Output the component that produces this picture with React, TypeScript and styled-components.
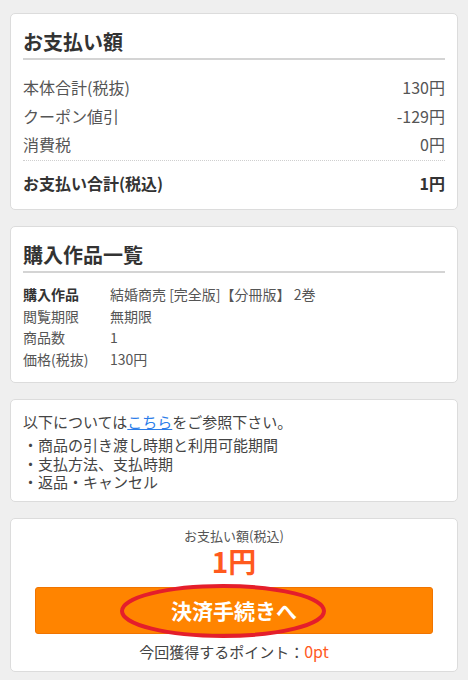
import React from 'react';
import styled, { createGlobalStyle } from 'styled-components';

const GlobalStyle = createGlobalStyle`
  html, body {
    margin: 0;
    padding: 0;
    background: #efefef;
  }
  body {
    font-family: "Noto Sans CJK JP", "Noto Sans", sans-serif;
    color: #333;
  }
`;

const summaryRows = [
  { label: '本体合計(税抜)', value: '130円' },
  { label: 'クーポン値引', value: '-129円' },
  { label: '消費税', value: '0円' },
];

const itemRows = [
  { label: '購入作品', value: '結婚商売 [完全版]【分冊版】 2巻', strong: true },
  { label: '閲覧期限', value: '無期限' },
  { label: '商品数', value: '1' },
  { label: '価格(税抜)', value: '130円' },
];

const notes = ['商品の引き渡し時期と利用可能期間', '支払方法、支払時期', '返品・キャンセル'];

const App = () => {
  return (
    <>
      <GlobalStyle />
      <Page>
        <Card>
          <CardTitle>お支払い額</CardTitle>
          <SummaryList>
            {summaryRows.map((row) => (
              <SummaryRow key={row.label}>
                <span>{row.label}</span>
                <span>{row.value}</span>
              </SummaryRow>
            ))}
          </SummaryList>
          <TotalRow>
            <span>お支払い合計(税込)</span>
            <span>1円</span>
          </TotalRow>
        </Card>

        <Card>
          <CardTitle>購入作品一覧</CardTitle>
          <ItemGrid>
            {itemRows.map((row) => (
              <React.Fragment key={row.label}>
                <ItemLabel $strong={row.strong}>{row.label}</ItemLabel>
                <ItemValue>{row.value}</ItemValue>
              </React.Fragment>
            ))}
          </ItemGrid>
        </Card>

        <NoteCard>
          <NoteLead>
            以下については<NoteLink href="#">こちら</NoteLink>をご参照下さい。
          </NoteLead>
          <NoteList>
            {notes.map((note) => (
              <li key={note}>・{note}</li>
            ))}
          </NoteList>
        </NoteCard>

        <CheckoutCard>
          <CheckoutLabel>お支払い額(税込)</CheckoutLabel>
          <CheckoutAmount>1円</CheckoutAmount>
          <ButtonWrap>
            <CheckoutButton type="button">決済手続きへ</CheckoutButton>
            <Circle width="212" height="58" viewBox="0 0 212 58">
              <ellipse cx="106" cy="29" rx="101" ry="25" fill="none" stroke="#e41e2b" strokeWidth="4" />
            </Circle>
          </ButtonWrap>
          <Points>
            今回獲得するポイント：<PointValue>0pt</PointValue>
          </Points>
        </CheckoutCard>
      </Page>
    </>
  );
};

const Page = styled.div`
  display: flex;
  flex-direction: column;
  gap: 16px;
  padding: 13px 10px 8px;
`;

const Card = styled.section`
  background: #fff;
  border: 1px solid #dcdcdc;
  border-radius: 5px;
  padding: 0 12px 12px;
`;

const CardTitle = styled.h2`
  margin: 0;
  padding-top: 14px;
  padding-bottom: 2px;
  font-size: 20px;
  line-height: 28px;
  font-weight: bold;
  color: #333;
  border-bottom: 2px solid #d4d4d4;
`;

const SummaryList = styled.div`
  margin-top: 13px;
  border-bottom: 1px dotted #cfcfcf;
  padding-bottom: 1px;
`;

const SummaryRow = styled.div`
  display: flex;
  justify-content: space-between;
  font-size: 16px;
  line-height: 28.5px;
  color: #555;
`;

const TotalRow = styled(SummaryRow)`
  padding-top: 8px;
  font-weight: bold;
  color: #333;
`;

const ItemGrid = styled.div`
  display: grid;
  grid-template-columns: 87px 1fr;
  margin-top: 11px;
  font-size: 14px;
  line-height: 21.5px;
  color: #555;
`;

const ItemLabel = styled.span<{ $strong?: boolean }>`
  font-weight: ${(p) => (p.$strong ? 'bold' : 'normal')};
  color: ${(p) => (p.$strong ? '#333' : '#555')};
`;

const ItemValue = styled.span``;

const NoteCard = styled(Card)`
  padding-bottom: 9px;
`;

const NoteLead = styled.p`
  margin: 11px 0 3px;
  font-size: 15px;
  line-height: 22px;
  color: #444;
`;

const NoteLink = styled.a`
  color: #2b7de9;
  text-decoration: underline;
`;

const NoteList = styled.ul`
  margin: 0;
  padding: 0;
  list-style: none;
  font-size: 15px;
  line-height: 18.5px;
  color: #444;
`;

const CheckoutCard = styled(Card)`
  display: flex;
  flex-direction: column;
  align-items: center;
  padding: 8px 24px 9px;
`;

const CheckoutLabel = styled.div`
  font-size: 13px;
  line-height: 18px;
  color: #555;
`;

const CheckoutAmount = styled.div`
  font-size: 28px;
  line-height: 32px;
  font-weight: bold;
  color: #ff5a1e;
`;

const ButtonWrap = styled.div`
  position: relative;
  align-self: stretch;
  margin-top: 10px;
`;

const CheckoutButton = styled.button`
  display: block;
  width: 100%;
  height: 47px;
  border: 1px solid #f07400;
  border-radius: 3px;
  background: #ff8400;
  color: #fff;
  font-family: inherit;
  font-size: 21px;
  font-weight: bold;
  cursor: pointer;
`;

const Circle = styled.svg`
  position: absolute;
  left: 82px;
  top: -5px;
  pointer-events: none;
`;

const Points = styled.div`
  margin-top: 7px;
  font-size: 15px;
  line-height: 20px;
  color: #444;
`;

const PointValue = styled.span`
  font-size: 16px;
  color: #ff5a1e;
`;

export default App;
